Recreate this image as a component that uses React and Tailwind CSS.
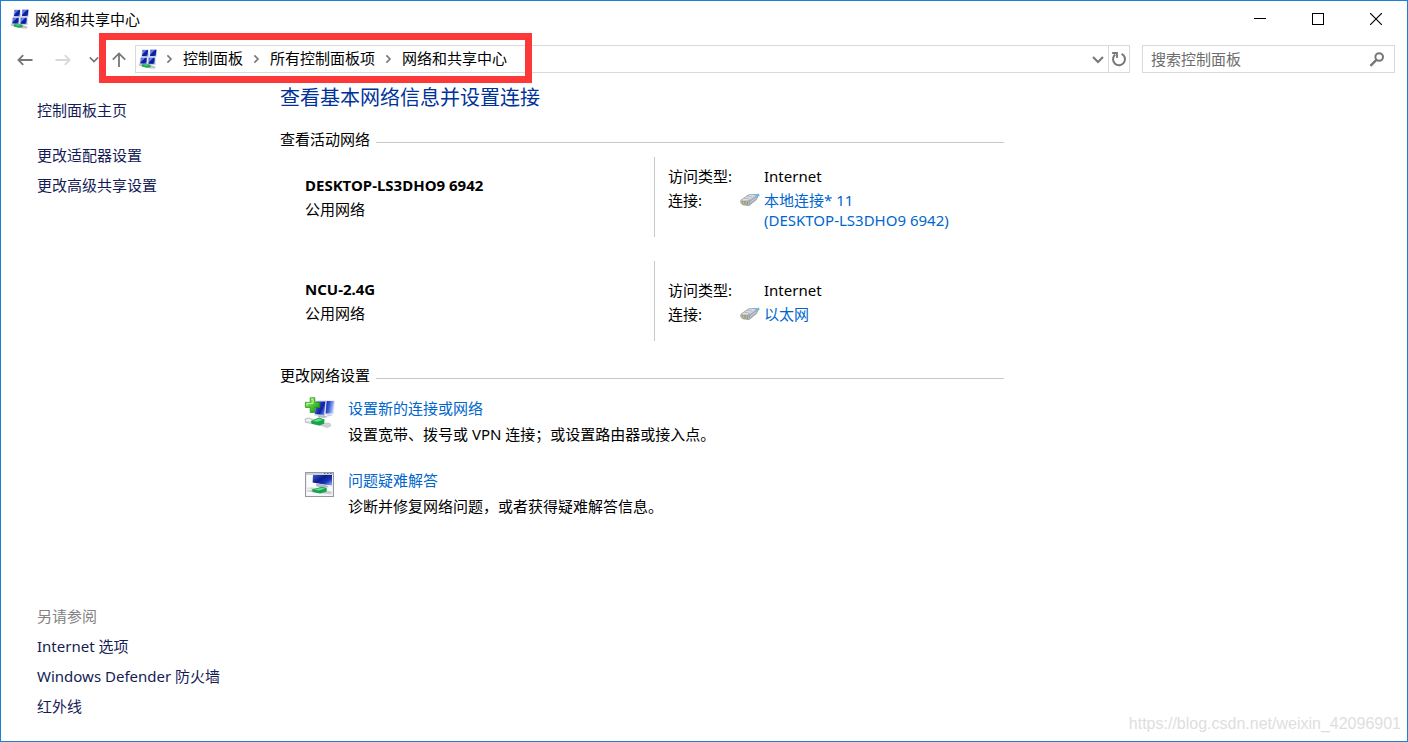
import React, { useState } from 'react';

const NetworkCenterIcon = () => (
    <svg width="20" height="20" viewBox="0 0 20 20" className="shrink-0" aria-hidden="true">
        <defs>
            <linearGradient id="screen" x1="0" y1="0" x2="1" y2="1">
                <stop offset="0" stopColor="#2a44c4" />
                <stop offset="0.3" stopColor="#6f8cf0" />
                <stop offset="0.45" stopColor="#1024a6" />
                <stop offset="0.7" stopColor="#0c1c98" />
                <stop offset="1" stopColor="#4f7cf2" />
            </linearGradient>
        </defs>
        <path d="M4 .6 10.6.4 11 8.6 3.4 8.8Z M12 .4 19 .2 18.6 8 11.4 8.6Z M2 8.8 9.4 8.4 9.8 15.6 1.6 16Z M10 8.8 17.6 8.2 17.6 16 10.2 16.2Z" fill="#c9d1e4" />
        <path d="M4.6 1 10 1 9.6 7.2 4 7Z" fill="url(#screen)" />
        <path d="M12.4.8 18.4.8 17.8 7 12 7Z" fill="url(#screen)" />
        <path d="M3 8.8 8.8 8.8 8.4 14.8 2.2 14.4Z" fill="url(#screen)" />
        <path d="M10.8 8.8 16.8 8.8 16.4 15 10.4 14.8Z" fill="url(#screen)" />
        <path d="M.6 14.8 4 14.8 12 16 17.6 17.4 17 19.4 13 19.4 5 17.8 1 16.6Z" fill="#bfc5c8" />
        <path d="M3.8 15.6 8.6 14.8 12.6 16 12.4 18.2 9 18.8 3.8 17.4Z" fill="#1aa650" />
        <path d="M5 15.8 8.8 15.2 11.2 16.2 7.4 16.7Z" fill="#63dc92" />
    </svg>
);

const NewConnectionIcon = () => (
    <svg width="32" height="32" viewBox="0 0 32 32" className="shrink-0" aria-hidden="true">
        <defs>
            <linearGradient id="monitor" x1="0" y1="0" x2="1" y2="0.6">
                <stop offset="0" stopColor="#8fa4ee" />
                <stop offset="0.35" stopColor="#2c48cc" />
                <stop offset="0.7" stopColor="#0f1f9f" />
                <stop offset="1" stopColor="#4c78ea" />
            </linearGradient>
            <linearGradient id="side" x1="0" y1="0" x2="1" y2="0.3">
                <stop offset="0" stopColor="#0f1f9f" />
                <stop offset="0.5" stopColor="#3a5cdc" />
                <stop offset="1" stopColor="#b9cdfa" />
            </linearGradient>
            <linearGradient id="plus" x1="0" y1="0" x2="1" y2="1">
                <stop offset="0" stopColor="#b4f08c" />
                <stop offset="0.55" stopColor="#4cc32a" />
                <stop offset="1" stopColor="#1d8c12" />
            </linearGradient>
        </defs>
        <path d="M21 4.4 31 4.4 29.6 18.4 20 18.6Z" fill="#dfe4ee" />
        <path d="M22.6 5 30.2 5 28.8 17.2 21.6 17.6Z" fill="url(#side)" />
        <path d="M11 4.6 22.4 4.6 20.8 20.6 10 19.4Z" fill="#d5dae6" />
        <path d="M12 5.4 21.4 5.4 20 19 11 18Z" fill="url(#monitor)" />
        <path d="M14 19.6 21 19.6 24 21 20 22 14 21Z" fill="#b4b9c4" />
        <path d="M22 18.4 27 18.2 28.4 19.6 24 20.4Z" fill="#cdd1d8" />
        <path d="M6.2 1.8h4.6v4.6h4.8v5h-4.8v5H6.2v-5H1.4v-5h4.8Z" fill="url(#plus)" stroke="#1f9416" strokeWidth="0.8" />
        <path d="M7 3h2v4.4H3V9" fill="none" stroke="#c6f7a8" strokeWidth="1" />
        <path d="M1 23 4 21.8 8 23 21 27 26 27.4 26.8 30 23 31.6 18 29.8 7 27.4 1.4 26.4Z" fill="#cdd4d5" stroke="#a7afb1" strokeWidth="0.5" />
        <path d="M2 23.4 5 23 8 24.4 6 25.8 2 25Z" fill="#f1f5f5" />
        <path d="M7 25 15 21.6 20.6 23.6 20 27.8 15.4 29.6 7.6 27.8Z" fill="#16a34c" />
        <path d="M9 25 15 22.4 19 24 13 25.8Z" fill="#5fe091" />
    </svg>
);

const TroubleshootIcon = () => (
    <svg width="32" height="32" viewBox="0 0 32 32" className="shrink-0" aria-hidden="true">
        <defs>
            <linearGradient id="panel" x1="0" y1="0" x2="1" y2="0.8">
                <stop offset="0" stopColor="#4058d0" />
                <stop offset="0.45" stopColor="#0d1c90" />
                <stop offset="0.75" stopColor="#1a35b8" />
                <stop offset="1" stopColor="#6c9af6" />
            </linearGradient>
        </defs>
        <rect x="1.5" y="4.5" width="28" height="24" fill="#eceef1" stroke="#95989d" />
        <path d="M2 5h27v2H2Z" fill="#c9ced8" />
        <path d="M20 5.5h1.6M23 5.5h1.6M26 5.5h1.6" stroke="#636b7b" />
        <rect x="3" y="7" width="25" height="20.6" fill="#fafbfc" />
        <path d="M9 7H28V17.4L20 16.6 8.6 14.4Z" fill="url(#panel)" />
        <path d="M12 15.4 22 17 25 19 19 20.4 12 18Z" fill="#b4b9c4" />
        <path d="M3 19.8 8 19.4 22 22.6 27.6 23.6 27.6 26.6 20 25.8 3 23.4Z" fill="#c9d0d1" />
        <path d="M3 20.4 6.6 20.4 8 21.6 5 22.4 3 22Z" fill="#f1f5f5" />
        <path d="M8 21.6 18 18.8 23 20.4 22.4 23.8 16 25.6 8.6 24Z" fill="#16a34c" />
        <path d="M10 21.8 18 19.6 21 20.8 15 22.6Z" fill="#5fe091" />
    </svg>
);

const EthernetIcon = () => (
    <svg width="20" height="20" viewBox="0 0 20 20" className="shrink-0" aria-hidden="true">
        <path d="M13.6 5 19 3.6 19.4 5.2 17 8.4Z" fill="#5ec0e6" />
        <path d="M.8 10.2 8.6 4.8 15.6 4.4 17.2 6.4 16.6 9.6 9 15.6 2.6 14.8.8 13Z" fill="#bcc1ca" stroke="#8d929b" strokeWidth="0.7" />
        <path d="M1.6 10.2 8.8 5.4 15 5 8 10.2Z" fill="#dfe3e9" />
        <path d="M8 10.6 15.6 5.4 16.6 9 9 15.2Z" fill="#a2a9b5" />
        <path d="M4.4 8.4 9 8.8M7 6.6 12 7" stroke="#a9afba" strokeWidth="0.8" />
        <path d="M10 9.6 15.2 6M10.2 12.4 15.8 8.2" stroke="#dde1e7" strokeWidth="0.8" />
        <path d="M1.8 11 7.6 11 8 14.8 3 14.2Z" fill="#8b8463" />
        <path d="M3.4 11.2v2.6M5 11.2v3M6.6 11.2v3.2" stroke="#eadf9c" strokeWidth="0.7" />
    </svg>
);

const Chevron = () => (
    <svg width="27" height="10" viewBox="0 0 27 10" aria-hidden="true">
        <path d="M11.4 1.4 15 5 11.4 8.6" fill="none" stroke="#777" strokeWidth="1.6" />
    </svg>
);

const DownChevron = ({ size }) => (
    <svg width={size} height={size} viewBox="0 0 12 12" aria-hidden="true">
        <path d="M1 4 6 9 11 4" fill="none" stroke="#777" strokeWidth="2" />
    </svg>
);

const Arrow = ({ color, d }) => (
    <svg width="16" height="16" viewBox="0 0 16 16" aria-hidden="true">
        <path d={d} fill="none" stroke={color} strokeWidth="1.8" />
    </svg>
);

const crumbs = ['控制面板', '所有控制面板项', '网络和共享中心'];

const networks = [
    { name: 'DESKTOP-LS3DHO9 6942', type: '公用网络', access: 'Internet', connection: ['本地连接* 11', '(DESKTOP-LS3DHO9 6942)'] },
    { name: 'NCU-2.4G', type: '公用网络', access: 'Internet', connection: ['以太网'] },
];

const tasks = [
    { icon: NewConnectionIcon, title: '设置新的连接或网络', text: '设置宽带、拨号或 VPN 连接；或设置路由器或接入点。' },
    { icon: TroubleshootIcon, title: '问题疑难解答', text: '诊断并修复网络问题，或者获得疑难解答信息。' },
];

const seeAlso = ['Internet 选项', 'Windows Defender 防火墙', '红外线'];

const TitleBar = () => (
    <header className="flex h-9 items-center pr-0.5 pl-[9px]">
        <NetworkCenterIcon />
        <span className="flex-1 pl-[5px]">网络和共享中心</span>
        <button aria-label="最小化" className="flex h-full w-[58px] items-center justify-center">
            <svg width="12" height="12" viewBox="0 0 12 12"><path d="M0 5.5h12" stroke="#000" /></svg>
        </button>
        <button aria-label="最大化" className="flex h-full w-[58px] items-center justify-center">
            <svg width="12" height="12" viewBox="0 0 12 12"><rect x="0.5" y="0.5" width="11" height="11" fill="none" stroke="#000" /></svg>
        </button>
        <button aria-label="关闭" className="flex h-full w-[58px] items-center justify-center">
            <svg width="12" height="12" viewBox="0 0 12 12"><path d="M0 0 12 12M12 0 0 12" stroke="#000" strokeWidth="1.2" /></svg>
        </button>
    </header>
);

const NavBar = () => {
    const [query, setQuery] = useState('');

    return (
        <nav className="relative flex h-11 items-center pr-3 pl-4">
            <button aria-label="后退" className="w-[38px]"><Arrow color="#777" d="M15.5 9H1.5M6.2 4.2 1.4 9 6.2 13.8" /></button>
            <button aria-label="前进" className="w-[34px]"><Arrow color="#d9d9d9" d="M.5 9H14.5M9.8 4.2 14.6 9 9.8 13.8" /></button>
            <button aria-label="最近的位置" className="w-[22px]"><DownChevron size={10} /></button>
            <button aria-label="上一级" className="w-6"><Arrow color="#777" d="M8 16V2.5M1.8 8.6 8 2.4 14.2 8.6" /></button>

            <div className="flex h-7 flex-1 items-center border border-[#d9d9d9] pl-0.5">
                <div className="-mr-0.5"><NetworkCenterIcon /></div>
                {crumbs.map((crumb) => (
                    <React.Fragment key={crumb}>
                        <Chevron />
                        <a href="#" className="pb-0.5">{crumb}</a>
                    </React.Fragment>
                ))}
                <button aria-label="以前的位置" className="ml-auto flex h-full w-5 items-center justify-center"><DownChevron size={12} /></button>
                <button aria-label="刷新" className="flex h-full w-[21px] items-center justify-center border-l border-[#d9d9d9]">
                    <svg width="16" height="16" viewBox="0 0 16 16" aria-hidden="true">
                        <path d="M10.6 2.8A6 6 0 1 1 4.2 3.6" fill="none" stroke="#777" strokeWidth="2" />
                        <path d="M1.2 2H6V7" fill="none" stroke="#777" strokeWidth="1.8" />
                    </svg>
                </button>
            </div>

            <div className="ml-3 flex h-7 w-[253px] items-center border border-[#d9d9d9] px-2">
                <input
                    type="text"
                    aria-label="搜索控制面板"
                    placeholder="搜索控制面板"
                    className="min-w-0 flex-1 outline-none placeholder:text-[#6d6d6d]"
                    value={query}
                    onChange={(e) => setQuery(e.target.value)}
                />
                <svg width="18" height="18" viewBox="0 0 18 18" aria-hidden="true">
                    <circle cx="11.2" cy="7" r="3.8" fill="none" stroke="#777" strokeWidth="2" />
                    <path d="M8.4 9.8 2.4 15.8" stroke="#777" strokeWidth="2.4" />
                </svg>
            </div>

            {/* Highlight frame round the path */}
            <div className="pointer-events-none absolute -top-1 left-[98px] h-[50px] w-[433px] border-7 border-[#fd3838]" />
        </nav>
    );
};

const Sidebar = () => (
    <aside className="flex w-[279px] shrink-0 flex-col justify-between pt-3.5 pb-5 pl-9 leading-[30px] text-[#151c55]">
        <ul>
            <li className="mb-[15px]"><a href="#">控制面板主页</a></li>
            <li><a href="#">更改适配器设置</a></li>
            <li><a href="#">更改高级共享设置</a></li>
        </ul>
        <div>
            <h2 className="text-[#838383]">另请参阅</h2>
            <ul>
                {seeAlso.map((item) => (
                    <li key={item}><a href="#">{item}</a></li>
                ))}
            </ul>
        </div>
    </aside>
);

const SectionTitle = ({ children }) => (
    <h2 className="flex items-center gap-1.5 leading-5">
        {children}
        <span className="mt-1.5 h-px flex-1 bg-[#c8c8c8]" />
    </h2>
);

const App = () => (
    <div className="relative flex min-h-screen flex-col border border-[#1e80d0] bg-white font-['Noto_Sans','Noto_Sans_CJK_SC',sans-serif] text-[15px] leading-5 text-black">
        <TitleBar />
        <NavBar />
        <div className="flex flex-1">
            <Sidebar />
            <main className="max-w-[724px] flex-1 pt-0.5">
                <h1 className="mb-4 text-xl leading-[30px] text-[#003399]">查看基本网络信息并设置连接</h1>

                <SectionTitle>查看活动网络</SectionTitle>
                <div className="mt-2 mb-6 flex flex-col gap-6">
                    {networks.map((net) => (
                        <section key={net.name} className="flex h-20 items-center pl-[25px]">
                            <div className="flex-1 leading-6">
                                <h3 className="font-bold">{net.name}</h3>
                                <p>{net.type}</p>
                            </div>
                            <div className="flex h-full w-[350px] items-center border-l border-[#c8c8c8] pl-[13px]">
                                <dl className="grid grid-cols-[72px_1fr] gap-y-0.5">
                                    <dt className="leading-6">访问类型:</dt>
                                    <dd className="pl-6 leading-6">{net.access}</dd>
                                    <dt>连接:</dt>
                                    <dd className="flex gap-1">
                                        <EthernetIcon />
                                        <a href="#" className="text-[#0066cc]">
                                            {net.connection.map((line) => (
                                                <span key={line} className="block">{line}</span>
                                            ))}
                                        </a>
                                    </dd>
                                </dl>
                            </div>
                        </section>
                    ))}
                </div>

                <SectionTitle>更改网络设置</SectionTitle>
                <ul className="mt-[11px] flex flex-col gap-[22px] pl-6">
                    {tasks.map(({ icon: Icon, title, text }) => (
                        <li key={title} className="flex gap-3 leading-6">
                            <Icon />
                            <div>
                                <a href="#" className="mb-0.5 block text-[#0066cc]">{title}</a>
                                <p>{text}</p>
                            </div>
                        </li>
                    ))}
                </ul>
            </main>
        </div>
        <span className="absolute right-1.5 bottom-[7px] font-['Liberation_Sans',sans-serif] text-base leading-5 text-[#dedede]">
            https://blog.csdn.net/weixin_42096901
        </span>
    </div>
);

export default App;
